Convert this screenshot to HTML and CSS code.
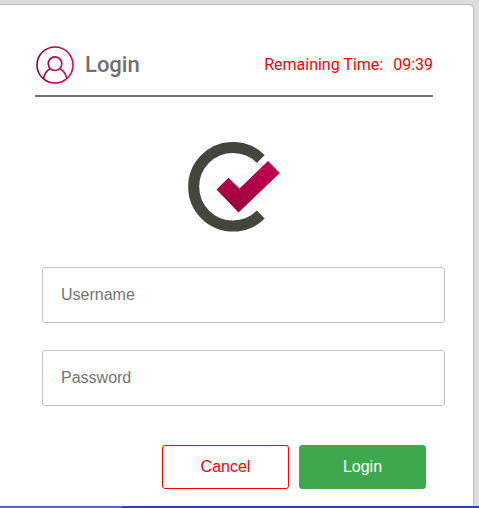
FILE: index.html
```html
<!DOCTYPE html>
<html lang="en">
<head>
<meta charset="utf-8">
<meta name="viewport" content="width=device-width, initial-scale=1">
<title>Login</title>
<link rel="stylesheet" href="styles.css">
</head>
<body>
<main class="card">
  <header class="card-header">
    <svg class="user-icon" viewBox="-1 -2 40 40" fill="none" stroke="url(#user-gradient)" stroke-width="1.6" aria-hidden="true">
      <defs>
        <linearGradient id="user-gradient" gradientUnits="userSpaceOnUse" x1="0" y1="0" x2="38" y2="0">
          <stop offset="0" stop-color="#850036"/>
          <stop offset="1" stop-color="#f00068"/>
        </linearGradient>
      </defs>
      <circle cx="19" cy="19" r="18"/>
      <circle cx="19" cy="17.700" r="6.800"/>
      <path d="M7.600 32.800C8.300 27.500 10.700 24.400 14.300 22.700M23.700 22.700C27.300 24.400 29.900 27.500 30.600 32.600"/>
    </svg>
    <h1 class="title">Login</h1>
    <p class="timer"><span>Remaining Time:</span><span>09:39</span></p>
  </header>
  <svg class="logo" viewBox="0 0 92 90" aria-hidden="true">
    <defs>
      <linearGradient id="check-gradient" x1="0" y1="1" x2="0" y2="0">
        <stop offset="0" stop-color="#98003b"/>
        <stop offset="1" stop-color="#c50053"/>
      </linearGradient>
    </defs>
    <path d="M72.800 17A39.300 39.300 0 1 0 72.800 72.500" fill="none" stroke="#44453c" stroke-width="11"/>
    <path d="M28.500 47.500L40.500 35.700 51.500 46.500 80 19 91.800 31 50.500 70.500Z" fill="url(#check-gradient)"/>
  </svg>
  <form class="form">
    <input class="field" type="text" placeholder="Username" aria-label="Username">
    <input class="field" type="password" placeholder="Password" aria-label="Password">
    <div class="actions">
      <button class="button cancel" type="button">Cancel</button>
      <button class="button login" type="submit">Login</button>
    </div>
  </form>
</main>
<div class="progress"><div class="progress-value"></div></div>
</body>
</html>
```
FILE: styles.css
```css
* {
  box-sizing: border-box;
}

body {
  margin: 0;
  min-height: 100vh;
  display: flex;
  flex-direction: column;
  background: #dcdcdc;
  font-family: Roboto, sans-serif;
  font-size: 16px;
}

.card {
  flex: 1;
  display: flex;
  flex-direction: column;
  margin: 4px 5px 0 0;
  border: 1px solid #bfbfbf;
  border-width: 1px 1px 0 0;
  border-radius: 0 5px 0 0;
  background: #fff;
}

.card-header {
  display: flex;
  align-items: center;
  margin: 39px 40px 0 35px;
  padding-bottom: 11px;
  border-bottom: 2px solid #707070;
}

.user-icon {
  width: 40px;
  height: 40px;
}

.title {
  margin: 0 auto 0 10px;
  color: #707070;
  font-size: 22px;
  font-weight: 500;
}

.timer {
  display: flex;
  gap: 10px;
  margin: 0;
  color: #f00;
}

.logo {
  width: 92px;
  height: 90px;
  margin: 45px 5px 0 0;
  align-self: center;
}

.form {
  display: flex;
  flex-direction: column;
  gap: 27px;
  margin: 35px 28px 0 42px;
}

.field {
  width: 100%;
  height: 56px;
  padding: 0 18px;
  border: 1px solid #c4c4c4;
  border-radius: 3px;
  background: #fff;
  color: #333;
  font: 16px "Liberation Sans", Arial, sans-serif;
}

.field::placeholder {
  color: #757575;
}

.actions {
  display: flex;
  justify-content: flex-end;
  gap: 10px;
  padding: 12px 19px 17px 0;
}

.button {
  width: 127px;
  height: 44px;
  border: 1px solid #f00;
  border-radius: 3px;
  background: #fff;
  color: #f00;
  font: 16px "Liberation Sans", Arial, sans-serif;
}

.login {
  border-color: #3fa74e;
  background: #3fa74e;
  color: #fff;
}

.progress {
  height: 2px;
  background: #2a43b5;
}

.progress-value {
  width: 122px;
  height: 2px;
  background: #5269d4;
}
```
